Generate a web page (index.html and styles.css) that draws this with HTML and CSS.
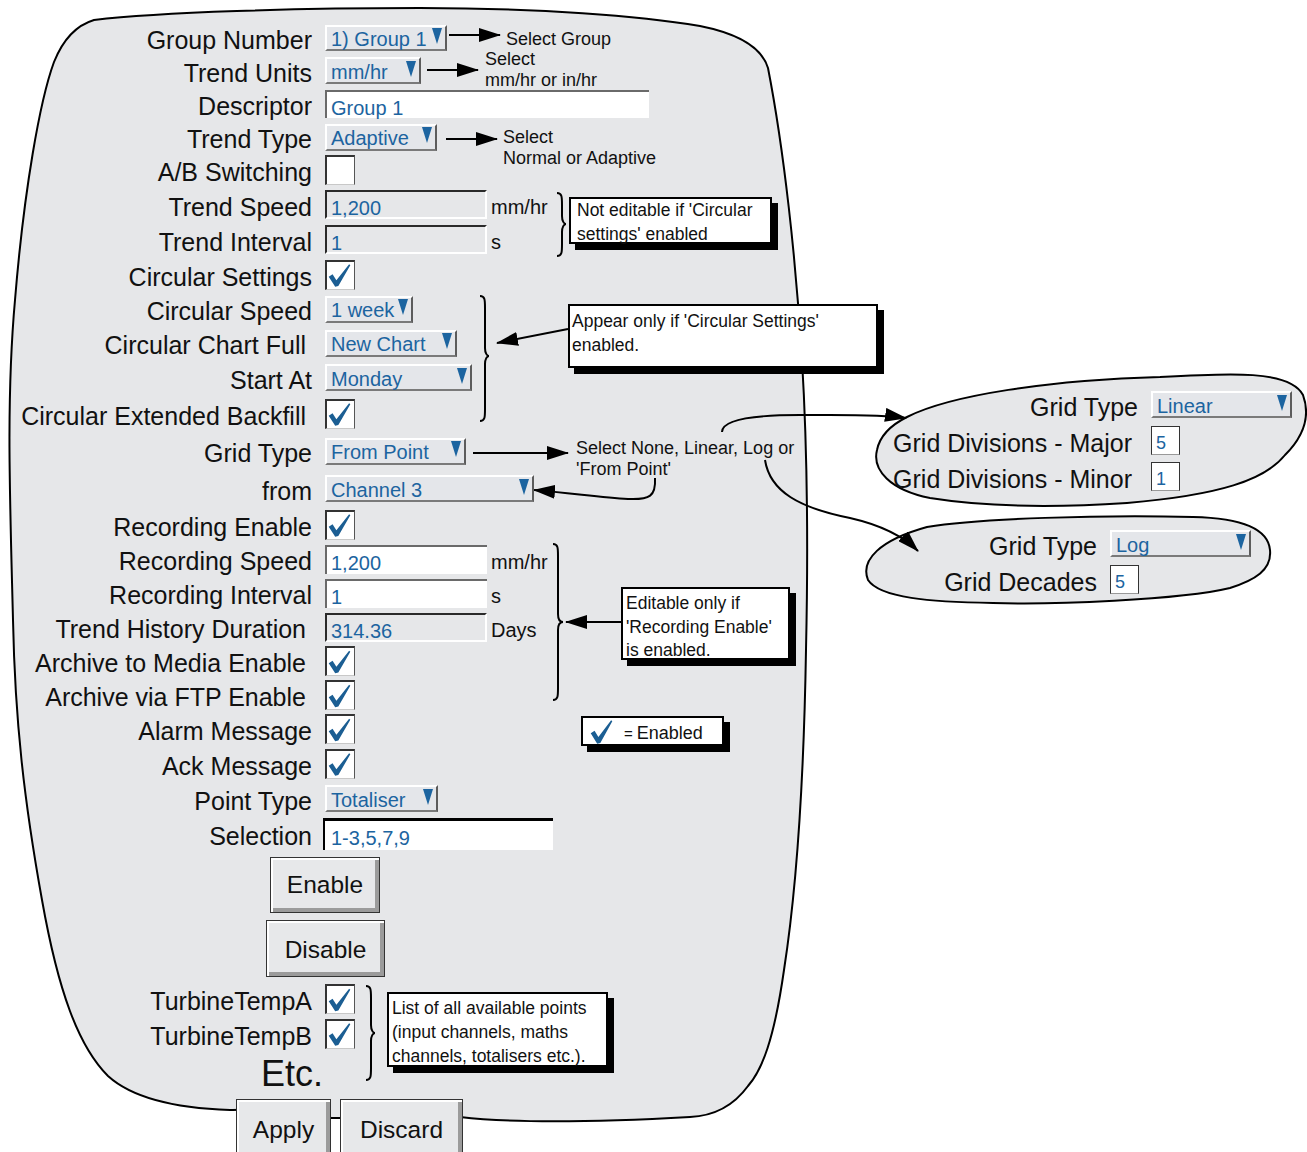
FILE: index.html
```html
<!DOCTYPE html>
<html>
<head>
<meta charset="utf-8">
<title>Group Configuration</title>
<link rel="stylesheet" href="styles.css">
</head>
<body>
<div class="sheet">

  <svg class="drawing" width="1307" height="1152" viewBox="0 0 1307 1152">
    <defs>
      <marker id="head" markerWidth="22" markerHeight="14" refX="21" refY="7" orient="auto" markerUnits="userSpaceOnUse">
        <path class="head" d="M0 0 L22 7 L0 14 Z"/>
      </marker>
    </defs>

    <!-- main page outline -->
    <path class="blob" d="M94 20 C160 12 300 8 420 8 C540 8 640 16 700 26 C740 34 762 48 768 68
      C784 150 796 260 802 360 C808 460 808 560 806 650 C804 770 798 880 784 970
      C774 1040 762 1070 748 1086 C732 1108 712 1116 690 1117 C600 1122 520 1124 460 1117
      C400 1112 330 1124 300 1114 C270 1108 250 1110 230 1110 C170 1108 130 1096 108 1076
      C78 1046 58 990 42 900 C24 800 15 720 13 620 C10 500 6 400 15 300
      C24 190 40 100 54 62 C62 42 74 26 94 20 Z"/>

    <!-- linear / log grid pop-outs -->
    <path class="blob" d="M907 417 C950 395 1050 380 1160 377 C1230 373 1290 370 1303 395
      C1312 420 1300 440 1285 455 C1265 480 1220 495 1127 503 C1050 508 980 506 930 498
      C890 490 872 470 877 450 C880 435 893 424 907 417 Z"/>
    <path class="blob" d="M927 527 C980 518 1100 515 1193 517 C1240 518 1268 528 1270 550
      C1272 570 1255 580 1230 588 C1180 600 1050 605 993 603 C930 602 880 598 868 580
      C860 560 880 540 927 527 Z"/>

    <!-- braces -->
    <path class="line" d="M557 193 C562 193 562 197 562 205 L562 216 C562 221 564 224 566 224 C564 224 562 227 562 232 L562 244 C562 252 562 256 557 256"/>
    <path class="line" d="M480 296 C485 296 485 300 485 308 L485 348 C485 353 487 356 489 356 C487 356 485 359 485 364 L485 409 C485 417 485 421 480 421"/>
    <path class="line" d="M553 544 C558 544 558 548 558 556 L558 614 C558 619 560 622 563 622 C560 622 558 625 558 630 L558 688 C558 696 558 700 553 700"/>
    <path class="line" d="M366 986 C371 986 371 990 371 998 L371 1025 C371 1030 373 1033 375 1033 C373 1033 371 1036 371 1041 L371 1068 C371 1076 371 1080 366 1080"/>

    <!-- arrows -->
    <path class="arrow" d="M449 35 H500"/>
    <path class="arrow" d="M427 70 H478"/>
    <path class="arrow" d="M446 139 H497"/>
    <path class="arrow" d="M568 329 L497 343"/>
    <path class="arrow" d="M473 453 H568"/>
    <path class="arrow" d="M655 478 C656 496 650 500 628 499 C600 497 570 493 534 490"/>
    <path class="arrow" d="M722 432 C722 418 760 415 800 415 C840 415 880 414 906 418"/>
    <path class="arrow" d="M765 460 C770 492 800 508 850 518 C885 526 905 538 918 551"/>
    <path class="arrow" d="M621 622 H566"/>
  </svg>

  <div class="form">
    <div class="lbl">Group Number</div>
    <div class="ctl"><div class="select sel-group"><span>1) Group 1</span><i class="tri"></i></div></div>

    <div class="lbl">Trend Units</div>
    <div class="ctl"><div class="select sel-units"><span>mm/hr</span><i class="tri"></i></div></div>

    <div class="lbl">Descriptor</div>
    <div class="ctl"><div class="field field-long">Group 1</div></div>

    <div class="lbl">Trend Type</div>
    <div class="ctl"><div class="select sel-type"><span>Adaptive</span><i class="tri"></i></div></div>

    <div class="lbl">A/B Switching</div>
    <div class="ctl"><div class="check"></div></div>

    <div class="lbl">Trend Speed</div>
    <div class="ctl"><div class="field field-num locked">1,200</div><span class="unit">mm/hr</span></div>

    <div class="lbl">Trend Interval</div>
    <div class="ctl"><div class="field field-num locked">1</div><span class="unit">s</span></div>

    <div class="lbl">Circular Settings</div>
    <div class="ctl"><div class="check"><i class="tick"></i></div></div>

    <div class="lbl">Circular Speed</div>
    <div class="ctl"><div class="select sel-speed"><span>1 week</span><i class="tri"></i></div></div>

    <div class="lbl shy">Circular Chart Full</div>
    <div class="ctl"><div class="select sel-full"><span>New Chart</span><i class="tri"></i></div></div>

    <div class="lbl">Start At</div>
    <div class="ctl"><div class="select sel-start"><span>Monday</span><i class="tri"></i></div></div>

    <div class="lbl shy">Circular Extended Backfill</div>
    <div class="ctl"><div class="check"><i class="tick"></i></div></div>

    <div class="lbl">Grid Type</div>
    <div class="ctl"><div class="select sel-grid"><span>From Point</span><i class="tri"></i></div></div>

    <div class="lbl">from</div>
    <div class="ctl"><div class="select sel-from"><span>Channel 3</span><i class="tri"></i></div></div>

    <div class="lbl">Recording Enable</div>
    <div class="ctl"><div class="check"><i class="tick"></i></div></div>

    <div class="lbl">Recording Speed</div>
    <div class="ctl"><div class="field field-num">1,200</div><span class="unit">mm/hr</span></div>

    <div class="lbl">Recording Interval</div>
    <div class="ctl"><div class="field field-num">1</div><span class="unit">s</span></div>

    <div class="lbl shy">Trend History Duration</div>
    <div class="ctl"><div class="field field-num locked">314.36</div><span class="unit">Days</span></div>

    <div class="lbl shy">Archive to Media Enable</div>
    <div class="ctl"><div class="check"><i class="tick"></i></div></div>

    <div class="lbl shy">Archive via FTP Enable</div>
    <div class="ctl"><div class="check"><i class="tick"></i></div></div>

    <div class="lbl">Alarm Message</div>
    <div class="ctl"><div class="check"><i class="tick"></i></div></div>

    <div class="lbl">Ack Message</div>
    <div class="ctl"><div class="check"><i class="tick"></i></div></div>

    <div class="lbl">Point Type</div>
    <div class="ctl"><div class="select sel-point"><span>Totaliser</span><i class="tri"></i></div></div>

    <div class="lbl">Selection</div>
    <div class="ctl"><div class="field field-select">1-3,5,7,9</div></div>

    <div class="btn btn-enable">Enable</div>
    <div class="btn btn-disable">Disable</div>

    <div class="lbl">TurbineTempA</div>
    <div class="ctl"><div class="check"><i class="tick"></i></div></div>

    <div class="lbl">TurbineTempB</div>
    <div class="ctl"><div class="check"><i class="tick"></i></div></div>

    <div class="lbl etc">Etc.</div>
    <div></div>

    <div class="actions">
      <div class="btn btn-apply">Apply</div>
      <div class="btn btn-discard">Discard</div>
    </div>
  </div>

  <div class="panel panel-linear">
    <div class="plbl">Grid Type</div>
    <div class="ctl"><div class="select sel-pop"><span>Linear</span><i class="tri"></i></div></div>
    <div class="plbl inset">Grid Divisions - Major</div>
    <div class="ctl"><div class="numbox">5</div></div>
    <div class="plbl inset">Grid Divisions - Minor</div>
    <div class="ctl"><div class="numbox">1</div></div>
  </div>

  <div class="panel panel-log">
    <div class="plbl">Grid Type</div>
    <div class="ctl"><div class="select sel-pop"><span>Log</span><i class="tri"></i></div></div>
    <div class="plbl">Grid Decades</div>
    <div class="ctl"><div class="numbox">5</div></div>
  </div>

  <p class="ann ann-group">Select Group</p>
  <p class="ann ann-units">Select<br>mm/hr or in/hr</p>
  <p class="ann ann-type">Select<br>Normal or Adaptive</p>
  <p class="ann ann-grid">Select None, Linear, Log or<br>'From Point'</p>

  <div class="note note-circ">Not editable if 'Circular<br>settings' enabled</div>
  <div class="note note-appear">Appear only if 'Circular Settings'<br>enabled.</div>
  <div class="note note-rec">Editable only if<br>'Recording Enable'<br>is enabled.</div>
  <div class="note note-legend"><i class="tick big"></i><span class="eq">=</span> Enabled</div>
  <div class="note note-points">List of all available points<br>(input channels, maths<br>channels, totalisers etc.).</div>

</div>
</body>
</html>
```

FILE: styles.css
```css
* {
	box-sizing: border-box;
}

body {
	margin: 0;
	background-color: #ffffff;
	color: #111111;
	font-family: "Liberation Sans", Arial, sans-serif;
}

.sheet {
	position: relative;
	width: 1307px;
	height: 1152px;
	overflow: hidden;
}

.drawing {
	position: absolute;
	left: 0;
	top: 0;
}

.blob {
	fill: #e6e7e9;
	stroke: #000000;
	stroke-width: 2;
}

.line, .arrow {
	fill: none;
	stroke: #000000;
	stroke-width: 2;
}

.arrow {
	marker-end: url(#head);
}

.head {
	fill: #000000;
}

/* main form */

.form {
	position: relative;
	display: grid;
	grid-template-columns: 312px 1fr;
	grid-template-rows: 33px 33px 34px 32px 34px 35px 35px 35px 34px 34px 35px 37px 38px 37px 35px 34px 34px 34px 34px 34px 34px 35px 35px 35px 66px 64px 36px 33px 47px 55px;
	column-gap: 13px;
	padding-top: 21px;
}

.lbl {
	align-self: center;
	padding-top: 4px;
	text-align: right;
	white-space: nowrap;
	font-size: 25px;
	line-height: 28px;
}

.lbl.shy {
	margin-right: 6px;
}

.ctl {
	display: flex;
	align-items: center;
	gap: 4px;
}

.unit {
	font-size: 20px;
	line-height: 24px;
	padding-top: 5px;
}

.select {
	display: flex;
	align-items: center;
	justify-content: space-between;
	height: 27px;
	padding: 0 3px 0 4px;
	background-color: #e4e6ea;
	border-top: 2px solid #ffffff;
	border-left: 2px solid #ffffff;
	border-right: 2px solid #5c5c5c;
	border-bottom: 2px solid #7a7a7a;
	color: #1c64a0;
	font-size: 20px;
	white-space: nowrap;
}

.select span {
	padding-top: 3px;
}

.tri {
	width: 0;
	height: 0;
	margin-bottom: 4px;
	border-left: 5.5px solid transparent;
	border-right: 5.5px solid transparent;
	border-top: 16px solid #1c64a0;
}

.sel-group { width: 122px; height: 26px; }
.sel-units { width: 96px; }
.sel-type { width: 112px; }
.sel-speed { width: 88px; }
.sel-full { width: 132px; }
.sel-start { width: 147px; }
.sel-grid { width: 141px; }
.sel-from { width: 209px; }
.sel-point { width: 113px; }
.sel-pop { width: 141px; }

.field {
	height: 28px;
	padding: 4px 0 0 4px;
	background-color: #ffffff;
	border-top: 2px solid #6a6a6a;
	border-left: 2px solid #6a6a6a;
	color: #1c64a0;
	font-size: 20px;
	line-height: 24px;
	white-space: nowrap;
}

.field.locked {
	background-color: #e6e7e9;
	border-top-color: #2a2a2a;
	border-left-color: #2a2a2a;
	border-right: 2px solid #ffffff;
	border-bottom: 2px solid #ffffff;
}

.field-long { width: 324px; }
.field-num { width: 162px; height: 29px; }

.field-select {
	width: 230px;
	height: 32px;
	margin-left: -2px;
	padding: 5px 0 0 6px;
	border-top: 3px solid #000000;
	border-left: 2px solid #000000;
}

.check {
	width: 30px;
	height: 30px;
	padding: 2px 0 0 1px;
	background-color: #ffffff;
	border: 1px solid #c8c8c8;
	border-top: 2px solid #333333;
	border-left: 2px solid #333333;
	border-right: 1px solid #555555;
}

.tick {
	display: block;
	width: 24px;
	height: 24px;
	background-color: #1b5e93;
	clip-path: polygon(3% 55%, 19% 45%, 35% 70%, 88% 3%, 93% 7%, 43% 94%, 30% 97%);
}

.tick.big {
	width: 24px;
	height: 25px;
	margin: 0 10px 2px 5px;
}

.btn {
	display: flex;
	align-items: center;
	justify-content: center;
	background-color: #e7e8ea;
	border: 1px solid #333333;
	box-shadow: inset 2px 2px 0 #ffffff, inset -4px -4px 0 #9b9b9b;
	font-size: 24.5px;
}

.btn-enable {
	grid-column: 1 / -1;
	justify-self: start;
	align-self: start;
	width: 110px;
	height: 56px;
	margin: 6px 0 0 270px;
}

.btn-disable {
	grid-column: 1 / -1;
	justify-self: start;
	align-self: start;
	width: 119px;
	height: 57px;
	margin: 3px 0 0 266px;
	padding-top: 2px;
}

.etc {
	align-self: start;
	margin: 4px -11px 0 0;
	padding-top: 0;
	font-size: 36px;
	line-height: 40px;
}

.actions {
	grid-column: 1 / -1;
	display: flex;
	align-items: flex-start;
	gap: 9px;
	padding: 2px 0 0 236px;
}

.btn-apply {
	width: 95px;
	height: 64px;
	padding-bottom: 2px;
}

.btn-discard {
	width: 123px;
	height: 64px;
	padding-bottom: 2px;
}

/* grid type pop-outs */

.panel {
	position: absolute;
	left: 880px;
	display: grid;
	column-gap: 13px;
}

.panel-linear {
	top: 387px;
	grid-template-columns: 258px auto;
	grid-template-rows: 35px 36px 36px;
}

.panel-log {
	top: 526px;
	grid-template-columns: 217px auto;
	grid-template-rows: 35px 36px;
}

.plbl {
	align-self: center;
	padding-top: 5px;
	text-align: right;
	white-space: nowrap;
	font-size: 25px;
	line-height: 28px;
}

.plbl.inset {
	margin-right: 6px;
}

.numbox {
	width: 29px;
	height: 29px;
	padding: 5px 0 0 4px;
	background-color: #ffffff;
	border: 1px solid #333333;
	border-bottom-color: #999999;
	color: #1c64a0;
	font-size: 18px;
	line-height: 22px;
}

/* annotations */

.ann {
	position: absolute;
	margin: 0;
	font-size: 18px;
	line-height: 21px;
	white-space: nowrap;
}

.ann-group { left: 506px; top: 29px; }
.ann-units { left: 485px; top: 49px; }
.ann-type { left: 503px; top: 127px; line-height: 20.5px; }
.ann-grid { left: 576px; top: 438px; }

.note {
	position: absolute;
	background-color: #ffffff;
	border: 2px solid #000000;
	box-shadow: 6px 6px 0 #000000;
	font-size: 17.5px;
	line-height: 24px;
	white-space: nowrap;
}

.note-circ {
	left: 569px;
	top: 197px;
	width: 203px;
	height: 47px;
	padding: 0 0 0 6px;
	line-height: 23.5px;
}

.note-appear {
	left: 568px;
	top: 304px;
	width: 310px;
	height: 64px;
	padding: 3px 0 0 2px;
}

.note-rec {
	left: 621px;
	top: 587px;
	width: 169px;
	height: 73px;
	padding: 3px 0 0 3px;
	line-height: 23.5px;
}

.note-legend {
	display: flex;
	align-items: center;
	left: 581px;
	top: 716px;
	width: 143px;
	height: 30px;
	padding: 4px 0 0 2px;
	font-size: 18px;
}

.eq {
	font-size: 15px;
	margin: 2px 4px 0 0;
}

.note-points {
	left: 387px;
	top: 992px;
	width: 221px;
	height: 75px;
	padding: 2px 0 0 3px;
}
```
